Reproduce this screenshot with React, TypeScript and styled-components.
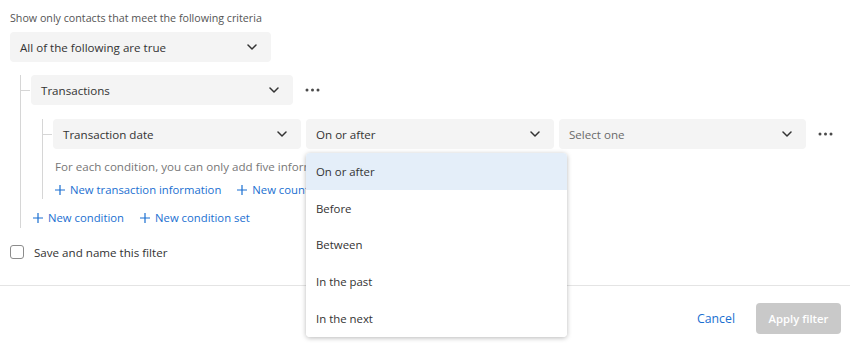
import React from 'react'
import styled, { createGlobalStyle } from 'styled-components'

const GlobalStyle = createGlobalStyle`
  html, body {
    margin: 0;
    padding: 0;
    background: #fff;
  }
  body {
    font-family: 'Open Sans', 'Liberation Sans', sans-serif;
    color: #333;
  }
`

const Page = styled.div`
  width: 850px;
  height: 343px;
  overflow: hidden;
  display: flex;
  flex-direction: column;
  box-sizing: border-box;
`

const Body = styled.div`
  padding: 10px 0 0 10px;
  flex: 1;
`

const Title = styled.div`
  font-size: 10.7px;
  line-height: 16px;
  color: #555;
  margin-bottom: 6px;
`

const SelectBox = styled.div<{ $width: number }>`
  position: relative;
  width: ${(p) => p.$width}px;
  height: 30px;
  box-sizing: border-box;
  background: #f4f4f4;
  border-radius: 4px;
  display: flex;
  align-items: center;
  justify-content: space-between;
  padding: 0 10px;
  font-size: 11.6px;
  color: #333;
  flex-shrink: 0;
`

const Placeholder = styled.span`
  color: #6a6a6a;
`

const Chevron = () => (
  <svg width="10" height="6" viewBox="0 0 10 6" style={{ marginRight: 4 }}>
    <path d="M1 1l4 4 4-4" fill="none" stroke="#333" strokeWidth="1.5" strokeLinecap="round" strokeLinejoin="round" />
  </svg>
)

const Dots = () => (
  <svg width="15" height="4" viewBox="0 0 15 4">
    <circle cx="2" cy="2" r="1.5" fill="#4a4a4a" />
    <circle cx="7.5" cy="2" r="1.5" fill="#4a4a4a" />
    <circle cx="13" cy="2" r="1.5" fill="#4a4a4a" />
  </svg>
)

const Branch = styled.div<{ $left: number; $bottom: number }>`
  margin-left: ${(p) => p.$left}px;
  border-left: 1px solid #d6d6d6;
  padding-left: 10px;
  padding-bottom: ${(p) => p.$bottom}px;
`

const Row = styled.div<{ $top: number }>`
  position: relative;
  display: flex;
  align-items: center;
  gap: 5px;
  margin-top: ${(p) => p.$top}px;

  &::before {
    content: '';
    position: absolute;
    left: -11px;
    top: 50%;
    width: 10px;
    border-top: 1px solid #d6d6d6;
  }
`

const MoreButton = styled.div`
  width: 23px;
  height: 30px;
  display: flex;
  align-items: center;
  justify-content: center;
  margin-left: 3px;
`

const Helper = styled.div`
  font-size: 11.6px;
  line-height: 16px;
  color: #777;
  margin: 10px 0 0 2px;
  white-space: nowrap;
`

const Links = styled.div<{ $top: number; $left: number }>`
  display: flex;
  gap: 16px;
  margin: ${(p) => p.$top}px 0 0 ${(p) => p.$left}px;
  white-space: nowrap;
`

const LinkButton = styled.span`
  font-size: 11.3px;
  line-height: 16px;
  color: #1a6fd1;
  display: inline-flex;
  align-items: center;
  gap: 5px;
`

const Plus = () => (
  <svg width="10" height="10" viewBox="0 0 10 10">
    <path d="M5 0v10M0 5h10" stroke="#1a6fd1" strokeWidth="1.2" />
  </svg>
)

const CheckRow = styled.label`
  display: flex;
  align-items: center;
  gap: 10px;
  height: 16px;
  margin-top: 16px;
  font-size: 11.6px;
  color: #333;
`

const Checkbox = styled.span`
  width: 14px;
  height: 14px;
  border: 1px solid #8c8c8c;
  border-radius: 3px;
  box-sizing: border-box;
  background: #fff;
`

const Footer = styled.div`
  border-top: 1px solid #e4e4e4;
  height: 58px;
  display: flex;
  align-items: flex-start;
  justify-content: flex-end;
  gap: 21px;
  padding: 17px 9px 0 0;
  box-sizing: border-box;
`

const Cancel = styled.span`
  font-size: 12.3px;
  line-height: 31px;
  color: #1a6fd1;
`

const ApplyButton = styled.div`
  width: 85px;
  height: 31px;
  border-radius: 4px;
  background: #c9c9c9;
  color: #fff;
  font-size: 11.3px;
  font-weight: 600;
  display: flex;
  align-items: center;
  justify-content: center;
`

const Menu = styled.div`
  position: absolute;
  left: 0;
  top: 34px;
  width: 261px;
  background: #fff;
  border-radius: 4px;
  box-shadow: 0 1px 5px rgba(0, 0, 0, 0.28);
  z-index: 10;
  overflow: hidden;
`

const MenuItem = styled.div<{ $active?: boolean }>`
  height: 36.8px;
  display: flex;
  align-items: center;
  padding: 0 10px;
  box-sizing: border-box;
  font-size: 11.4px;
  color: #333;
  background: ${(p) => (p.$active ? '#e4eef9' : '#fff')};
`

const options = ['On or after', 'Before', 'Between', 'In the past', 'In the next']

export default function App() {
  return (
    <Page>
      <GlobalStyle />
      <Body>
        <Title>Show only contacts that meet the following criteria</Title>
        <SelectBox $width={261}>
          All of the following are true
          <Chevron />
        </SelectBox>
        <Branch $left={10} $bottom={2}>
          <Row $top={13}>
            <SelectBox $width={262}>
              Transactions
              <Chevron />
            </SelectBox>
            <MoreButton>
              <Dots />
            </MoreButton>
          </Row>
          <Branch $left={11} $bottom={1}>
            <Row $top={14}>
              <SelectBox $width={248}>
                Transaction date
                <Chevron />
              </SelectBox>
              <SelectBox $width={248}>
                On or after
                <Chevron />
                <Menu>
                  {options.map((o, i) => (
                    <MenuItem key={o} $active={i === 0}>
                      {o}
                    </MenuItem>
                  ))}
                </Menu>
              </SelectBox>
              <SelectBox $width={247}>
                <Placeholder>Select one</Placeholder>
                <Chevron />
              </SelectBox>
              <MoreButton>
                <Dots />
              </MoreButton>
            </Row>
            <Helper>For each condition, you can only add five information fields.</Helper>
            <Links $top={7} $left={2}>
              <LinkButton>
                <Plus />
                New transaction information
              </LinkButton>
              <LinkButton>
                <Plus />
                New count condition
              </LinkButton>
            </Links>
          </Branch>
          <Links $top={11} $left={2}>
            <LinkButton>
              <Plus />
              New condition
            </LinkButton>
            <LinkButton>
              <Plus />
              New condition set
            </LinkButton>
          </Links>
        </Branch>
        <CheckRow>
          <Checkbox />
          Save and name this filter
        </CheckRow>
      </Body>
      <Footer>
        <Cancel>Cancel</Cancel>
        <ApplyButton>Apply filter</ApplyButton>
      </Footer>
    </Page>
  )
}
